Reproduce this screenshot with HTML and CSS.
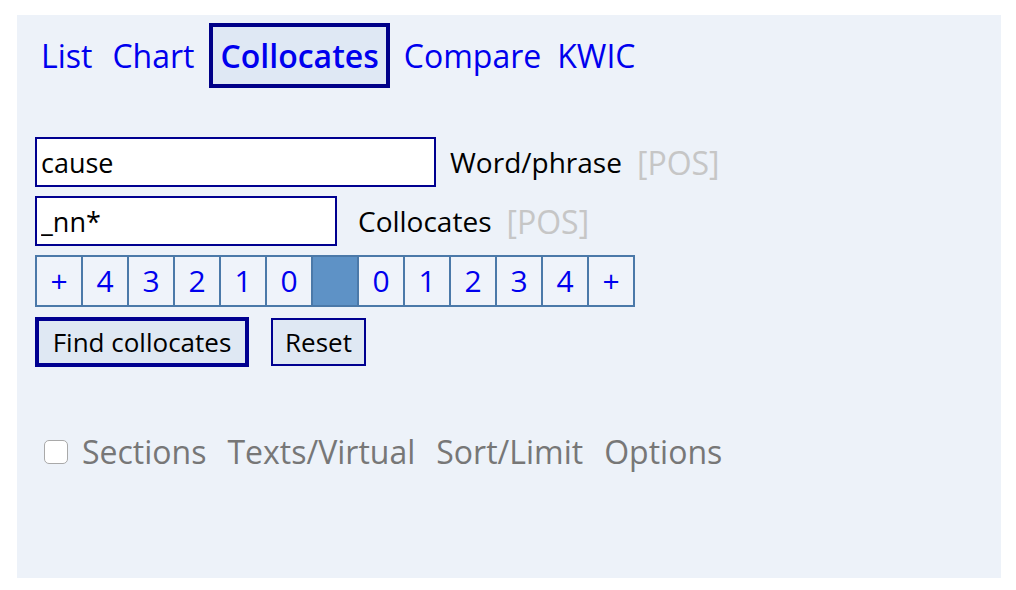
FILE: index.html
```html
<!DOCTYPE html>
<html>
<head>
<meta charset="utf-8">
<link rel="stylesheet" href="styles.css">
</head>
<body>
<div class="panel">
  <nav class="tabs">
    <a class="tab tab-list">List</a>
    <a class="tab tab-chart">Chart</a>
    <a class="tab active">Collocates</a>
    <a class="tab tab-compare">Compare</a>
    <a class="tab">KWIC</a>
  </nav>
  <div class="form">
    <div class="row">
      <input class="field field-word" type="text" value="cause">
      <span class="label label-word">Word/phrase</span>
      <span class="pos">[POS]</span>
    </div>
    <div class="row">
      <input class="field field-coll" type="text" value="_nn*">
      <span class="label label-coll">Collocates</span>
      <span class="pos">[POS]</span>
    </div>
    <div class="span-row">
      <span class="cell">+</span>
      <span class="cell">4</span>
      <span class="cell">3</span>
      <span class="cell">2</span>
      <span class="cell">1</span>
      <span class="cell">0</span>
      <span class="cell node"></span>
      <span class="cell">0</span>
      <span class="cell">1</span>
      <span class="cell">2</span>
      <span class="cell">3</span>
      <span class="cell">4</span>
      <span class="cell">+</span>
    </div>
    <div class="buttons">
      <button class="btn btn-primary">Find collocates</button>
      <button class="btn btn-reset">Reset</button>
    </div>
  </div>
  <div class="options">
    <input class="check" type="checkbox">
    <span class="opt">Sections</span>
    <span class="opt">Texts/Virtual</span>
    <span class="opt">Sort/Limit</span>
    <span class="opt">Options</span>
  </div>
</div>
</body>
</html>
```

FILE: styles.css
```css
html, body {
  margin: 0;
  padding: 0;
  background: #ffffff;
}
body {
  padding: 15px 0 0 17px;
  font-family: "Open Sans", "Noto Sans", sans-serif;
  font-size: 30px;
}
.panel {
  box-sizing: border-box;
  width: 984px;
  height: 563px;
  background: #edf2f9;
  padding: 8px 0 0 18px;
}
.tabs {
  display: flex;
  align-items: center;
  height: 65px;
  font-size: 32px;
  gap: 14px;
  padding-left: 6px;
}
.tab {
  color: #0000ee;
  line-height: 57px;
}
.tab-list {
  margin-right: 6px;
}
.tab-chart {
  margin-right: 1px;
}
.tab-compare {
  margin-right: 2px;
}
.tab.active {
  font-weight: 600;
  border: 4px solid #000088;
  background: #dfe8f4;
  padding: 0 7px;
}
.form {
  margin-top: 49px;
  display: flex;
  flex-direction: column;
}
.row {
  display: flex;
  align-items: center;
  height: 50px;
  margin-bottom: 9px;
  font-size: 28px;
}
.field {
  box-sizing: border-box;
  height: 50px;
  border: 2px solid #000090;
  background: #ffffff;
  font-family: inherit;
  font-size: 27px;
  padding: 0 4px;
  color: #000;
  margin: 0;
  outline: none;
}
.field-word { width: 401px; }
.field-coll { width: 302px; }
.label {
  color: #000;
}
.label-word { margin-left: 14px; }
.label-coll { margin-left: 21px; }
.pos {
  color: #c6c6c6;
  font-size: 32px;
  margin-left: 15px;
}
.span-row {
  display: flex;
  align-self: flex-start;
  border: 2px solid #4b79a9;
  border-right: none;
  font-size: 30px;
}
.cell {
  box-sizing: border-box;
  width: 46px;
  height: 48px;
  border-right: 2px solid #4b79a9;
  background: #eff3fa;
  color: #0000ee;
  display: flex;
  align-items: center;
  justify-content: center;
  line-height: 1;
}
.cell.node {
  background: #5e92c6;
}
.buttons {
  display: flex;
  align-items: center;
  margin-top: 10px;
  gap: 22px;
}
.btn {
  box-sizing: border-box;
  font-family: inherit;
  font-size: 26px;
  color: #000;
  background: #dfe8f3;
  margin: 0;
  border-radius: 0;
  padding: 0;
}
.btn-primary {
  width: 214px;
  height: 50px;
  border: 4px solid #000090;
}
.btn-reset {
  width: 95px;
  height: 48px;
  border: 2px solid #000090;
}
.options {
  display: flex;
  align-items: center;
  margin-top: 63px;
  padding-left: 9px;
  color: #777777;
  font-size: 32px;
}
.check {
  appearance: none;
  box-sizing: border-box;
  width: 24px;
  height: 24px;
  margin: 0 14px 0 0;
  border: 1.5px solid #a9a9a9;
  border-radius: 5px;
  background: #ffffff;
}
.opt {
  margin-right: 21px;
}
```
